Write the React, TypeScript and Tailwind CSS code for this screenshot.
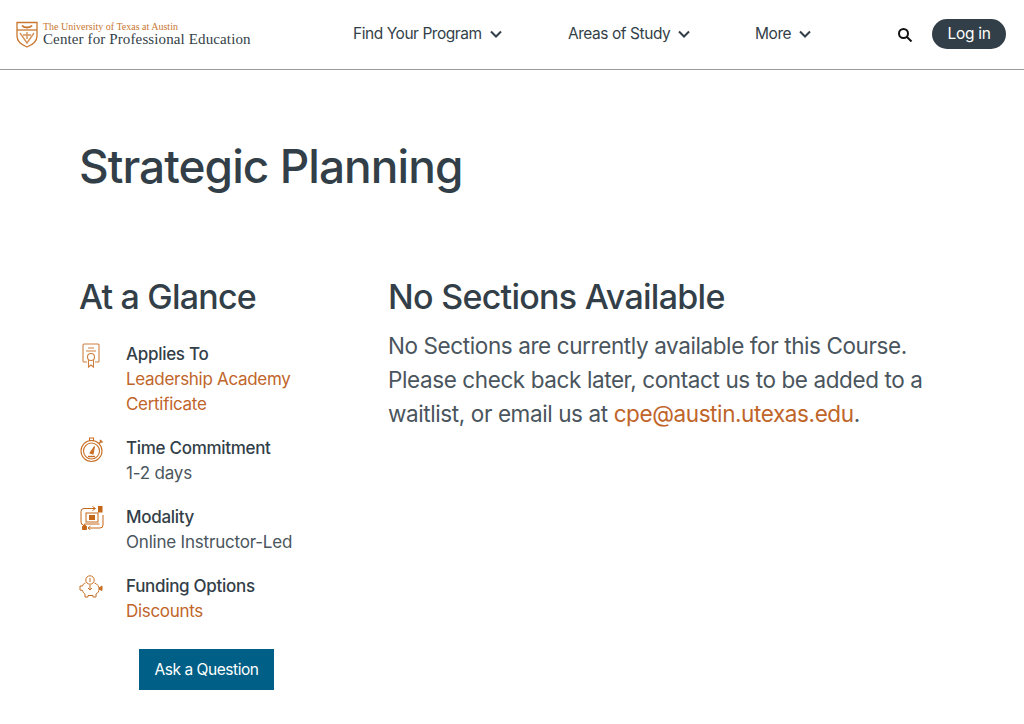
import React from "react";

const Chevron = () => (
  <svg width="12" height="8" viewBox="0 0 12 8" fill="none" stroke="#333f48" strokeWidth="2" className="mt-[1px]">
    <path d="M1 1.5 L6 6.5 L11 1.5" />
  </svg>
);

const Shield = () => (
  <svg width="22" height="27" viewBox="0 0 22 27" fill="none" stroke="#c9772f" strokeWidth="1.3">
    <path d="M1 1.5 H21 V15 C21 21 16 24 11 26 C6 24 1 21 1 15 Z" />
    <path d="M1 9 H21" />
    <path d="M6 4.5 C8 7 14 7 16 4.5" strokeWidth="2" />
    <path d="M4 12 L11 22 L18 12 M7 14 H15 M11 11 V18" strokeWidth="1.4" opacity="0.8" />
  </svg>
);

const Cert = () => (
  <svg width="18" height="26" viewBox="0 0 18 26" fill="none" stroke="#bf5700" strokeWidth="1.1" opacity="0.75" className="ml-[1px]">
    <path d="M5 19 H2 Q1 19 1 18 V2 Q1 1 2 1 H16 Q17 1 17 2 V18 Q17 19 16 19 H13" />
    <path d="M6 5 H12 M4 8 H14" />
    <circle cx="9" cy="14" r="3.5" />
    <path d="M6.5 17 V24 L9 22 L11.5 24 V17" />
  </svg>
);

const Watch = () => (
  <svg width="24" height="26" viewBox="0 0 24 26" fill="none" stroke="#bf5700" strokeWidth="1.1" opacity="0.85" className="ml-[-1px]">
    <circle cx="11.5" cy="14" r="10.5" />
    <circle cx="11.5" cy="14" r="8" />
    <path d="M9.5 1 H13.5 V3.5 H9.5 Z" />
    <path d="M20 3 L22.5 5.5 M21.2 4.2 L19 6.5" strokeWidth="1.6" />
    <path d="M10 16 L14.5 9.5 L13 17 Z" fill="#bf5700" />
    <path d="M8 19.5 H15" strokeWidth="1.4" />
  </svg>
);

const Modality = () => (
  <svg width="24" height="24" viewBox="0 0 24 24" fill="none" stroke="#bf5700" strokeWidth="1" opacity="0.9" className="ml-[-1px]">
    <path d="M15 2.5 H4 Q1 2.5 1 5.5 V16 Q1 19 3.5 19" />
    <path d="M8 22 H20 Q23 22 23 19 V9" />
    <path d="M12.5 0.5 L15.5 2.5 L12.5 4.5 M10.5 20 L8 22 L10.5 24" />
    <rect x="18.5" y="0.5" width="3.5" height="5.5" fill="#bf5700" />
    <path d="M2.5 20.5 L4.5 18.5 L6.5 20.5 V23.5 H2.5 Z" fill="#bf5700" />
    <rect x="6" y="7" width="12" height="9" />
    <rect x="9.5" y="9.5" width="5" height="4" fill="#bf5700" />
    <path d="M4.5 18 H19.5" />
  </svg>
);

const Piggy = () => (
  <svg width="24" height="24" viewBox="0 0 24 24" fill="none" stroke="#bf5700" strokeWidth="1" opacity="0.85" className="ml-[-2px]">
    <circle cx="11" cy="5" r="4.2" />
    <path d="M11 3 V7" />
    <path d="M6.5 8 C4.5 8.5 4 9.5 3.5 11 L1 11 V15 L3.5 15.5 C4 17.5 5 18.5 6 19 V22 H9 V20.5 H14 V22 H17 V19 C19 18 20 16.5 20 14 C20 11.5 18.5 9 15.5 8" />
    <path d="M11 10 V14.5 M9 13 L11 15 L13 13" />
    <path d="M20 13 L23 11 V15.5 L20 14" fill="#bf5700" />
  </svg>
);

const Item = ({ icon, title, children }: { icon: React.ReactNode; title: string; children: React.ReactNode }) => (
  <div className="flex">
    <div className="w-[46px] shrink-0 pt-[1px] pl-[1px]">{icon}</div>
    <div>
      <div className="text-[17px] leading-[25px] font-medium text-[#333f48] tracking-[-0.3px]">{title}</div>
      <div className="text-[17px] leading-[25px] text-[#4a555d] tracking-[-0.2px]">{children}</div>
    </div>
  </div>
);

const NavLink = ({ label, className }: { label: string; className: string }) => (
  <div className={`flex items-center gap-[8px] text-[15.5px] text-[#333f48] tracking-[-0.45px] ${className}`}>
    {label}
    <Chevron />
  </div>
);

export default function App() {
  return (
    <div className="w-[1024px] h-[724px] overflow-hidden bg-white font-['Inter',sans-serif] text-[#333f48]">
      <header className="h-[70px] flex items-center border-b border-[#9a9a9a] pl-[16px]">
        <div className="flex items-center gap-[5px] w-[337px]">
          <Shield />
          <div className="font-['Liberation_Serif',serif] mt-[-1px]">
            <div className="text-[10px] leading-[10px] text-[#c9772f]">The University of Texas at Austin</div>
            <div className="text-[15px] leading-[15px] text-[#333f48] tracking-[0.12px]">Center for Professional Education</div>
          </div>
        </div>
        <NavLink label="Find Your Program" className="w-[215px] mb-[2px]" />
        <NavLink label="Areas of Study" className="w-[187px] mb-[2px]" />
        <NavLink label="More" className="w-[142px] mb-[2px]" />
        <svg width="16" height="16" viewBox="0 0 16 16" fill="none" stroke="#111" strokeWidth="2" className="mt-[1px]">
          <circle cx="6.5" cy="6.5" r="4.5" />
          <path d="M10 10 L14.5 14.5" />
        </svg>
        <div className="ml-[19px] w-[74px] h-[30px] mt-[-1px] rounded-full bg-[#333f48] text-white text-[15.5px] tracking-[-0.3px] flex items-center justify-center">
          Log in
        </div>
      </header>

      <main className="pl-[80px]">
        <h1 className="pt-[69px] text-[46px] leading-[54px] font-medium tracking-[-0.95px] ml-[-1px] text-[#333f48]">Strategic Planning</h1>
        <div className="flex mt-[84px]">
          <aside className="w-[308px] shrink-0">
            <h2 className="text-[34px] leading-[40px] font-medium tracking-[-0.8px] ml-[-1px] mb-[25px]">At a Glance</h2>
            <div className="flex flex-col gap-[19px]">
              <Item icon={<Cert />} title="Applies To">
                <span className="text-[#c0652a] tracking-[-0.3px]">Leadership Academy<br />Certificate</span>
              </Item>
              <Item icon={<Watch />} title="Time Commitment">1-2 days</Item>
              <Item icon={<Modality />} title="Modality">Online Instructor-Led</Item>
              <Item icon={<Piggy />} title="Funding Options">
                <span className="text-[#c0652a] tracking-[-0.3px]">Discounts</span>
              </Item>
            </div>
            <div className="ml-[59px] mt-[25px] w-[135px] h-[41px] bg-[#005f86] text-white text-[15.5px] tracking-[-0.45px] flex items-center justify-center">
              Ask a Question
            </div>
          </aside>
          <section>
            <h2 className="text-[34px] leading-[40px] font-medium tracking-[-0.72px] mb-[12px]">No Sections Available</h2>
            <p className="text-[22.5px] leading-[34px] tracking-[-0.4px] w-[560px] text-[#4a555d]">
              No Sections are currently available for this Course.<br />
              Please check back later, contact us to be added to a<br />
              waitlist, or email us at <span className="text-[#c0652a]">cpe@austin.utexas.edu</span>.
            </p>
          </section>
        </div>
      </main>
    </div>
  );
}
